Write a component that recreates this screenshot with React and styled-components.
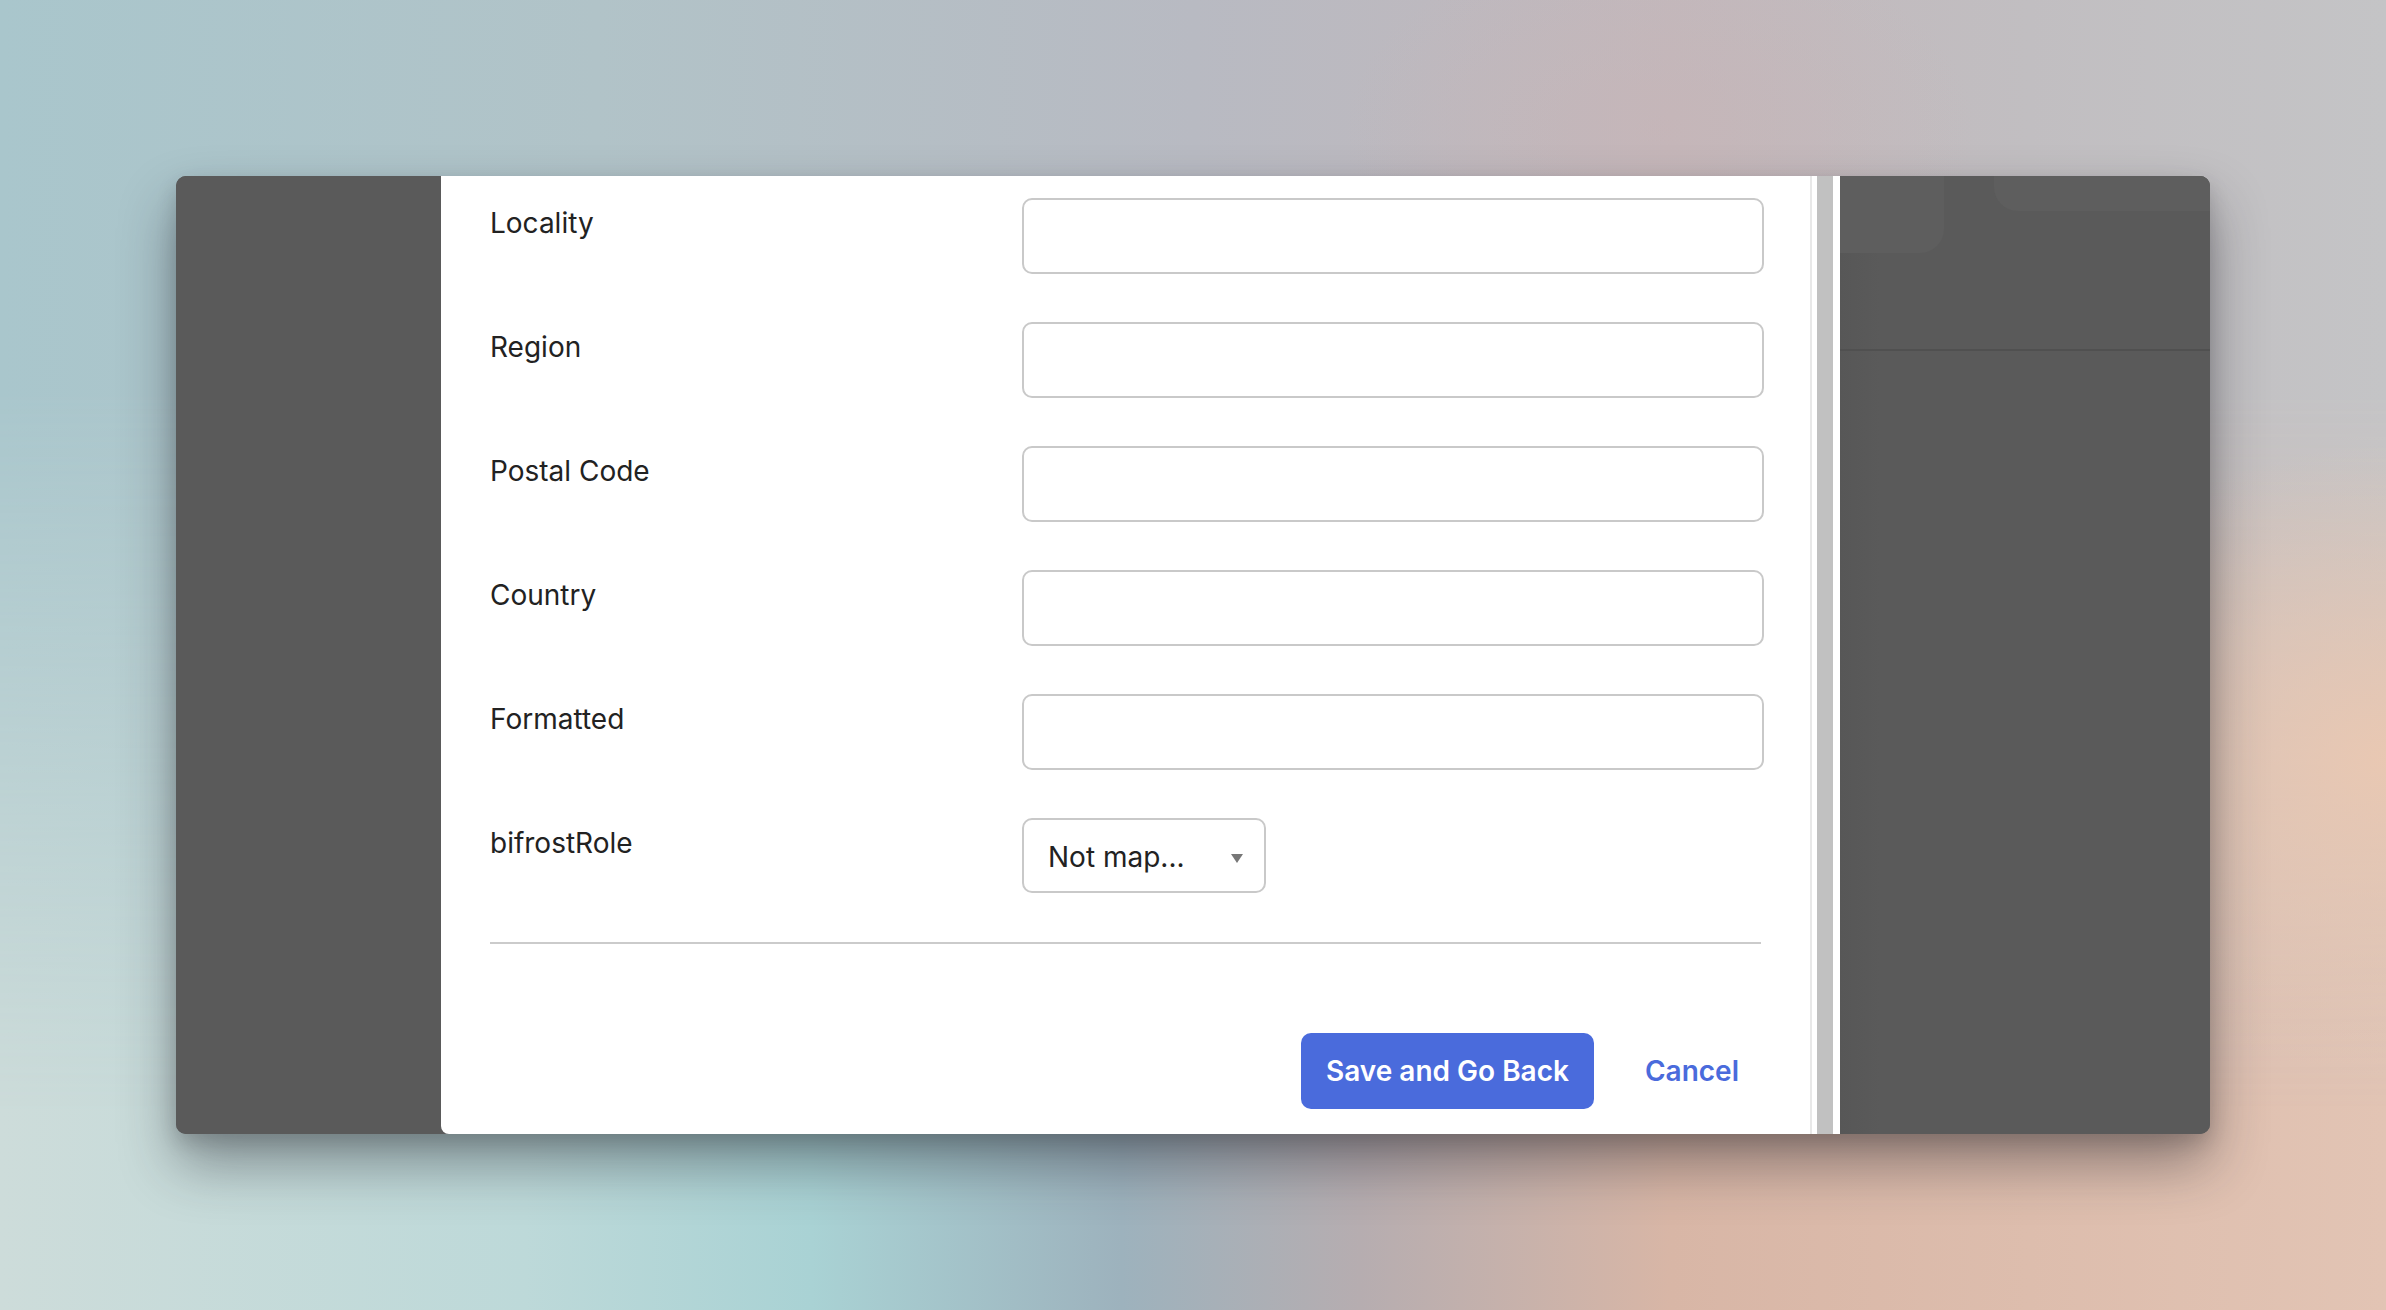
import styled, { createGlobalStyle } from "styled-components"

const GlobalStyle = createGlobalStyle`
    html, body {
        margin: 0;
        padding: 0;
        width: 100%;
        height: 100%;
    }
    body {
        font-family: Inter, "Noto Sans", sans-serif;
        overflow: hidden;
    }
    * { box-sizing: border-box; }
`

const Backdrop = styled.div`
    position: relative;
    width: 2386px;
    height: 1310px;
    padding: 176px 0 0 176px;
    background: linear-gradient(90deg, #cddcda 0%, #bdd9d9 22%, #a9d2d4 34%, #9db2bd 47%, #b6adb0 57%, #d8b6a6 70%, #e2c4b4 100%);

    &::before {
        content: "";
        position: absolute;
        inset: 0;
        background: linear-gradient(90deg, #a9c6cc 0%, #b1c3c8 25%, #b8bac2 50%, #c2b8bc 70%, #c1bec1 85%, #c4c4c6 100%);
        -webkit-mask-image: linear-gradient(180deg, #000 0%, #000 30%, transparent 85%);
        mask-image: linear-gradient(180deg, #000 0%, #000 30%, transparent 85%);
    }

    &::after {
        content: "";
        position: absolute;
        inset: 0;
        background:
            radial-gradient(ellipse 500px 420px at 2386px 760px, rgba(234, 200, 178, 0.95), transparent 75%),
            radial-gradient(ellipse 420px 260px at 1660px 130px, rgba(200, 180, 182, 0.55), transparent 75%);
    }
`

const Window = styled.div`
    position: relative;
    z-index: 1;
    width: 2034px;
    height: 958px;
    display: flex;
    border-radius: 10px;
    overflow: hidden;
    background: #5a5a5a;
    box-shadow: 0 30px 55px rgba(30, 30, 40, 0.42), 0 8px 20px rgba(0, 0, 0, 0.15);
`

const SidePane = styled.div`
    width: 265px;
    flex-shrink: 0;
    background: #5a5a5a;
`

const Modal = styled.div`
    width: 1371px;
    flex-shrink: 0;
    background: #fff;
    border-right: 2px solid #e8e8e8;
    border-bottom-left-radius: 8px;
    padding: 22px 49px 0 49px;
    display: flex;
    flex-direction: column;
    overflow: hidden;
`

const Scrollbar = styled.div`
    width: 28px;
    flex-shrink: 0;
    background: #fff;
    padding: 0 7px 0 5px;
    display: flex;
`

const Thumb = styled.div`
    flex: 1;
    background: #c1c1c1;
`

const RightPane = styled.div`
    flex: 1;
    display: flex;
    flex-direction: column;
    background: linear-gradient(90deg, #575757 0px, #5a5a5a 40px);
`

const RightHeader = styled.div`
    height: 175px;
    display: flex;
    align-items: flex-start;
    gap: 50px;
    border-bottom: 2px solid #505050;
`

const GhostTab = styled.div`
    width: ${(p) => p.$w || "auto"};
    flex: ${(p) => (p.$grow ? 1 : "none")};
    height: ${(p) => p.$h};
    background: #5e5e5e;
    border-radius: ${(p) => p.$radius};
`

const Row = styled.div`
    display: grid;
    grid-template-columns: 532px 742px;
    margin-bottom: 48px;
`

const Label = styled.label`
    padding-top: 9px;
    font-size: 28px;
    line-height: 1.21;
    color: #222;
`

const Input = styled.input`
    height: 76px;
    width: 100%;
    border: 2px solid #c9c9c9;
    border-radius: 10px;
    background: #fff;
    font-family: inherit;
    font-size: 28px;
    padding: 0 24px;
    outline: none;
`

const Select = styled.div`
    width: 244px;
    height: 75px;
    border: 2px solid #c9c9c9;
    border-radius: 10px;
    display: flex;
    align-items: center;
    justify-content: space-between;
    padding: 2px 21px 0 24px;
    font-size: 28px;
    color: #222;
`

const Caret = styled.span`
    width: 0;
    height: 0;
    border-left: 6px solid transparent;
    border-right: 6px solid transparent;
    border-top: 9px solid #777;
    margin-top: 3px;
`

const Divider = styled.hr`
    margin: 1px 0 0 0;
    border: none;
    border-top: 2px solid #cbcbcb;
`

const Footer = styled.div`
    display: flex;
    justify-content: flex-end;
    gap: 26px;
    margin: 89px -3px 0 0;
`

const Button = styled.button`
    height: 76px;
    padding: 0 25px;
    border: none;
    border-radius: 10px;
    background: ${(p) => (p.$primary ? "#4a6bdc" : "transparent")};
    color: ${(p) => (p.$primary ? "#fff" : "#4a6bdc")};
    font-family: inherit;
    font-size: 28px;
    font-weight: 600;
    cursor: pointer;
`

const fields = ["Locality", "Region", "Postal Code", "Country", "Formatted"]

const App = () => {
  return (
    <Backdrop>
        <GlobalStyle />
        <Window>
            <SidePane />
            <Modal>
                {fields.map((f) => (
                    <Row key={f}>
                        <Label>{f}</Label>
                        <Input />
                    </Row>
                ))}
                <Row>
                    <Label>bifrostRole</Label>
                    <Select>
                        <span>Not map...</span>
                        <Caret />
                    </Select>
                </Row>
                <Divider />
                <Footer>
                    <Button $primary>Save and Go Back</Button>
                    <Button>Cancel</Button>
                </Footer>
            </Modal>
            <Scrollbar>
                <Thumb />
            </Scrollbar>
            <RightPane>
                <RightHeader>
                    <GhostTab $w="104px" $h="77px" $radius="0 0 24px 0" />
                    <GhostTab $grow $h="35px" $radius="0 0 0 24px" />
                </RightHeader>
            </RightPane>
        </Window>
    </Backdrop>
  )
}

export default App
